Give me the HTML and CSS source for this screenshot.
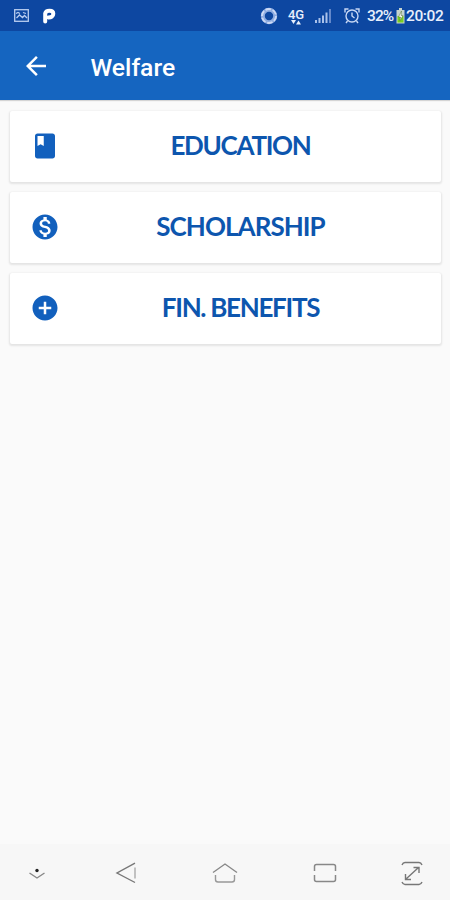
FILE: index.html
```
<!DOCTYPE html>
<html lang="en">
<head>
  <meta charset="UTF-8" />
  <meta name="viewport" content="width=device-width, initial-scale=1.0" />
  <title>Welfare</title>
  <link rel="stylesheet" href="styles.css">
</head>
<body>
  <!-- Status Bar -->
  <div class="status-bar">
    <div class="status-left">
      <svg class="icon-image" width="15" height="13" viewBox="0 0 15 13" fill="none" stroke="#b9cdf0" stroke-width="1.3">
        <rect x=".7" y=".7" width="13.6" height="11.6" />
        <path d="M2 4.500l2-1 2 1M9 3.500l3 1M2.500 9l3-3 3 2.500 2-2 2.500 2.500" />
      </svg>
      <svg width="14" height="16" viewBox="0 0 14 16">
        <path d="M3.200 13.600V5.500C3.600 3.500 5.500 2.800 7.500 2.800c2.400 0 3.800 1 3.800 3 0 2.500-2 3.700-5 3.600" fill="none" stroke="#fff" stroke-width="4" stroke-linecap="round" />
      </svg>
    </div>
    <div class="status-right">
      <svg class="icon-sync" width="18" height="18" viewBox="0 0 18 18" fill="none">
        <circle cx="9" cy="9" r="6.200" stroke="#8eace0" stroke-width="4" />
        <circle cx="9" cy="9" r="7" stroke="#cddaf5" stroke-width="1.800" stroke-dasharray="5.500 1.800" />
      </svg>
      <div class="network">
        <span>4G</span>
        <svg width="10" height="5" viewBox="0 0 10 5" fill="#e8effc"><path d="M0 0h5L2.500 4zM5 4.500h5L7.500 .5z" /></svg>
      </div>
      <svg class="icon-signal" width="17" height="14" viewBox="0 0 17 14" fill="#aac1ea">
        <path d="M0 11h2v3H0zM3.500 9h2v5h-2zM7 6.500h2V14H7zM10.500 3.500h2V14h-2z" />
        <path d="M14 0h2v14h-2z" fill="#6488ca" />
      </svg>
      <svg class="icon-alarm" width="16" height="16" viewBox="0 0 16 16" fill="none" stroke="#c8d8f5" stroke-width="1.400">
        <circle cx="8" cy="8" r="6" />
        <path d="M8 4.500V8l2.500 2M1 4.500V1h3.500M11.500 1H15v3.500M3.500 13L2 15M12.500 13l1.500 2" />
      </svg>
      <span class="battery-level">32%</span>
      <svg class="icon-battery" width="9" height="16" viewBox="0 0 9 16">
        <path d="M3 0h3v2h2.500v13.500H.5V2H3z" fill="#c5d4ce" />
        <path d="M1.500 8h6v6.500h-6z" fill="#79cf21" />
        <path d="M5.500 3L2.500 9h2L3.800 13 7 7.500H5z" fill="#fff" stroke="#53752f" stroke-width=".5" />
      </svg>
      <span class="clock">20:02</span>
    </div>
  </div>

  <!-- App Bar -->
  <header class="app-bar">
    <svg class="back" width="30" height="30" viewBox="0 0 24 24" fill="#fff">
      <path d="M20 11H7.830l5.590-5.590L12 4l-8 8 8 8 1.410-1.410L7.830 13H20v-2z" />
    </svg>
    <h1>Welfare</h1>
  </header>

  <!-- Menu Cards -->
  <main class="menu">
    <a class="card">
      <svg class="card-icon" viewBox="0 0 24 24">
        <path d="M18 2H6c-1.100 0-2 .9-2 2v16c0 1.100.9 2 2 2h12c1.100 0 2-.9 2-2V4c0-1.100-.9-2-2-2zM6 4h5v8l-2.500-1.500L6 12V4z" />
      </svg>
      <span class="card-title education">EDUCATION</span>
    </a>
    <a class="card">
      <svg class="card-icon" viewBox="0 0 24 24">
        <path d="M12 2C6.480 2 2 6.480 2 12s4.480 10 10 10 10-4.480 10-10S17.520 2 12 2zm1.410 16.090V20h-2.670v-1.930c-1.710-.36-3.160-1.460-3.270-3.400h1.960c.1 1.050.82 1.870 2.650 1.870 1.960 0 2.400-.98 2.400-1.590 0-.83-.44-1.610-2.670-2.140-2.480-.6-4.180-1.620-4.180-3.670 0-1.720 1.390-2.840 3.110-3.210V4h2.670v1.950c1.860.45 2.790 1.860 2.850 3.390H14.300c-.05-1.110-.64-1.870-2.220-1.870-1.500 0-2.400.68-2.400 1.640 0 .84.65 1.390 2.670 1.910s4.180 1.390 4.180 3.910c-.01 1.830-1.380 2.830-3.120 3.160z" />
      </svg>
      <span class="card-title scholarship">SCHOLARSHIP</span>
    </a>
    <a class="card">
      <svg class="card-icon" viewBox="0 0 24 24">
        <path d="M12 2C6.480 2 2 6.480 2 12s4.480 10 10 10 10-4.480 10-10S17.520 2 12 2zm5 11h-4v4h-2v-4H7v-2h4V7h2v4h4v2z" />
      </svg>
      <span class="card-title benefits">FIN. BENEFITS</span>
    </a>
  </main>

  <!-- System Navigation -->
  <nav class="system-nav">
    <svg width="18" height="14" viewBox="0 0 18 14" fill="none" stroke="#888" stroke-width="1.400">
      <path d="M1.500 7L9 12l7.500-5" />
      <circle cx="9" cy="4.500" r="1.700" fill="#222" stroke="none" />
    </svg>
    <svg width="22" height="22" viewBox="0 0 22 22" fill="none" stroke="#777" stroke-width="1.400">
      <path d="M20 1.200L2 11l18 9.500" />
      <path d="M20 5.500v11" stroke="#aaa" />
    </svg>
    <svg width="26" height="22" viewBox="0 0 26 22" fill="none" stroke="#888" stroke-width="1.400">
      <path d="M1 10.500L13 2l12 8.500" />
      <path d="M3.500 13v4.500q0 2.500 2.500 2.500h14q2.500 0 2.500-2.500V13" stroke="#999" />
    </svg>
    <svg width="24" height="20" viewBox="0 0 24 20" fill="none" stroke="#888" stroke-width="1.500">
      <path d="M1.500 8V3.500q0-2 2-2h17q2 0 2 2V8M1.500 12v4.500q0 2 2 2h17q2 0 2-2V12" />
    </svg>
    <svg width="22" height="25" viewBox="0 0 22 25" fill="none" stroke="#777" stroke-width="1.400">
      <path d="M1 4q1-2.500 3-2.500h14q2 0 3 2.500M1 21q1 2.500 3 2.500h14q2 0 3-2.500" />
      <path d="M5 18L17 7M12.500 6.500H18V12M4.500 13v5.500H10" />
    </svg>
  </nav>
</body>
</html>
```
FILE: styles.css
```
/* Global Reset & Base Styles */
* {
  margin: 0;
  padding: 0;
  box-sizing: border-box;
}
body {
  display: flex;
  flex-direction: column;
  height: 100vh;
  background-color: #fafafa;
  font-family: Roboto, sans-serif;
  overflow: hidden;
}
svg {
  display: block;
  flex-shrink: 0;
}
/* Status Bar */
.status-bar {
  display: flex;
  justify-content: space-between;
  align-items: center;
  height: 31px;
  padding: 0 7px 0 14px;
  background-color: #0d47a1;
  color: #e8effc;
}
.status-left,
.status-right {
  display: flex;
  align-items: center;
}
.status-left {
  gap: 13px;
}
.icon-sync {
  margin-right: 9px;
}
.network {
  display: flex;
  flex-direction: column;
  align-items: center;
  width: 18px;
  margin-right: 10px;
  padding-top: 3px;
  font-size: 13px;
  font-weight: 500;
  line-height: 11px;
}
.icon-signal {
  margin-right: 12px;
}
.icon-alarm {
  margin-right: 7px;
}
.battery-level,
.clock {
  font-size: 15.5px;
  font-weight: 500;
  line-height: 18px;
  white-space: nowrap;
}
.battery-level {
  width: 29px;
  letter-spacing: -0.9px;
}
.icon-battery {
  margin-right: 1px;
}
.clock {
  width: 37px;
  letter-spacing: -0.4px;
}
/* App Bar */
.app-bar {
  display: flex;
  align-items: center;
  height: 69px;
  padding-left: 21px;
  background-color: #1565c0;
  box-shadow: 0 1px 1px rgba(0, 0, 0, 0.15);
}
.app-bar h1 {
  margin-left: 39.5px;
  padding-top: 4px;
  color: #fff;
  font-size: 24.7px;
  font-weight: 500;
  line-height: 30px;
}
/* Menu Cards */
.menu {
  display: flex;
  flex: 1;
  flex-direction: column;
  gap: 10px;
  padding: 11px 9px 11px 10px;
}
.card {
  display: flex;
  align-items: center;
  height: 71px;
  padding: 0 20px 1px 20px;
  border-radius: 2px;
  background-color: #fff;
  box-shadow: 0 1px 2px 1px rgba(0, 0, 0, 0.09);
}
.card-icon {
  width: 30px;
  height: 30px;
  fill: #1260bd;
}
.card-title {
  flex: 1;
  padding-bottom: 2px;
  color: #0d56ae;
  font-family: Lato, sans-serif;
  font-size: 26px;
  font-weight: bold;
  line-height: 30px;
  text-align: center;
  white-space: nowrap;
}
.education {
  letter-spacing: -1.3px;
}
.scholarship {
  letter-spacing: -0.95px;
}
.benefits {
  letter-spacing: -1.3px;
}
/* System Navigation */
.system-nav {
  display: grid;
  grid-template-columns: 74px 103px 96px 104px 70px;
  align-items: center;
  justify-items: center;
  height: 56px;
  padding-top: 2px;
  background-color: #f7f7f7;
}
```
